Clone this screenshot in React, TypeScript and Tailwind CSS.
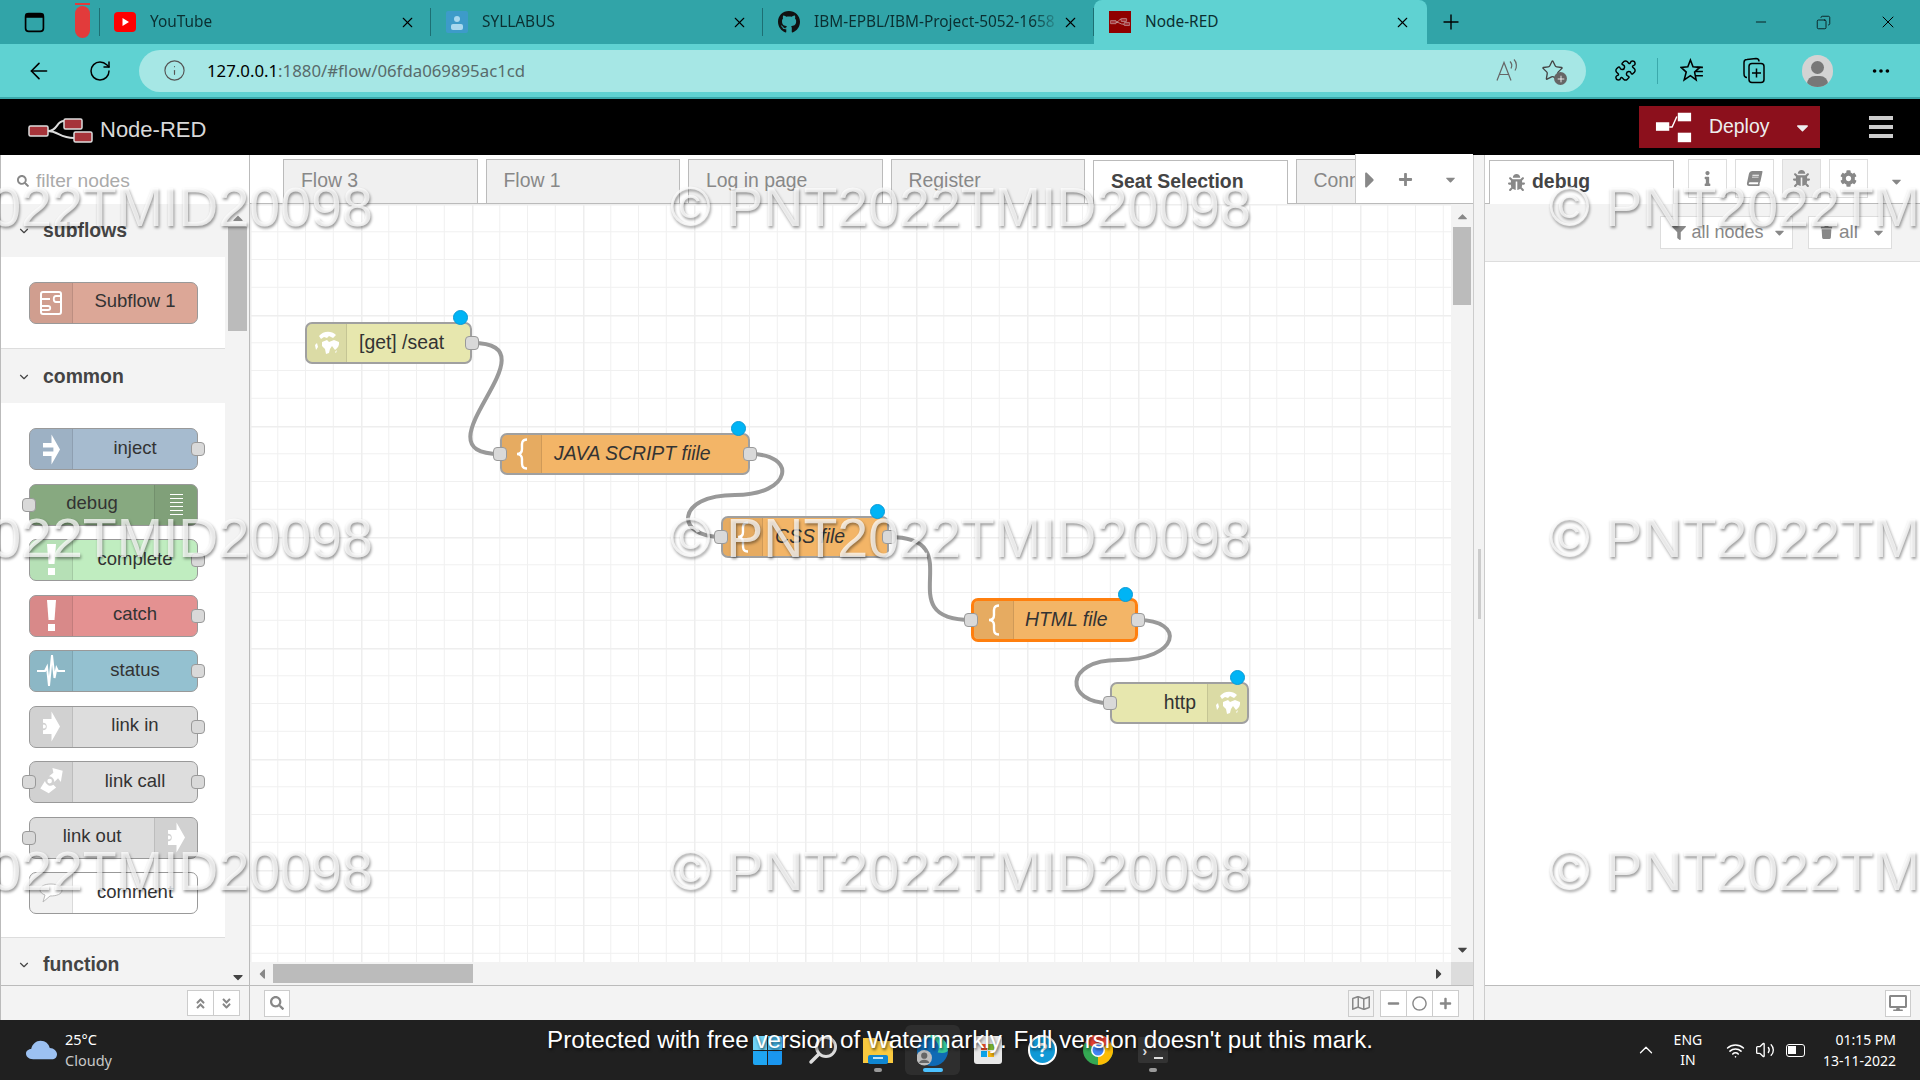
import React from "react";
import {
  ArrowLeft,
  ChevronDown,
  ChevronUp,
  Copy,
  Info,
  Minus,
  MoreHorizontal,
  Plus,
  Puzzle,
  RotateCw,
  Star,
  Volume2,
  Wifi,
  X,
} from "lucide-react";
import {
  FaAngleDoubleDown,
  FaAngleDoubleUp,
  FaBook,
  FaBug,
  FaCaretDown,
  FaCaretLeft,
  FaCaretRight,
  FaCaretUp,
  FaCog,
  FaDesktop,
  FaFilter,
  FaGithub,
  FaInfo,
  FaMinus,
  FaPlus,
  FaRegCircle,
  FaRegMap,
  FaSearch,
  FaTrash,
} from "react-icons/fa";

const NodeRedMark = ({ className }: { className: string }) => (
  <svg viewBox="0 0 65 25" className={className}>
    <path d="M20 13 C30 13 28 3 36 3 M20 13 C30 13 32 20 46 20" fill="none" stroke="#ddd" strokeWidth="2" />
    <rect x="1" y="8" width="19" height="10" rx="1.5" fill="#a6343a" stroke="#ddd" strokeWidth="1.5" />
    <rect x="36" y="1" width="18" height="10" rx="1.5" fill="#a6343a" stroke="#ddd" strokeWidth="1.5" />
    <rect x="46" y="14" width="18" height="10" rx="1.5" fill="#a6343a" stroke="#ddd" strokeWidth="1.5" />
  </svg>
);

const BrowserTab = ({
  title,
  icon,
  width,
}: {
  title: string;
  icon: React.ReactNode;
  width: string;
}) => (
  <div className={`flex h-full items-center ${width}`}>
    <div className="flex w-[22px] justify-center">{icon}</div>
    <span className="ml-[14px] flex-1 overflow-hidden text-[15.4px] whitespace-nowrap text-[#0b2f31] [mask-image:linear-gradient(to_right,black_88%,transparent)]">
      {title}
    </span>
    <X size={17} strokeWidth={1.5} className="mr-[14px] text-black" />
    <div className="h-[28px] w-px bg-[#1d6f73]" />
  </div>
);

const TabStrip = () => (
  <div className="flex h-[44px] items-center bg-[#31a4a8] font-['Noto_Sans',sans-serif]">
    <svg viewBox="0 0 20 20" className="ml-[24px] h-[21px] w-[21px]">
      <rect x="1.5" y="1.5" width="17" height="17" rx="3" fill="none" stroke="#000" strokeWidth="1.6" />
      <rect x="1.5" y="1.5" width="17" height="4" fill="#000" />
    </svg>
    <div className="relative ml-[30px] h-[32px] w-[15px] rounded-full bg-[#e23b3b]">
      <div className="absolute top-[-3px] left-0 h-[2px] w-full bg-[#e23b3b]" />
    </div>
    <div className="mr-[14px] ml-[9px] h-[28px] w-px bg-[#1d6f73]" />
    <BrowserTab
      title="YouTube"
      width="w-[317px]"
      icon={
        <svg viewBox="0 0 22 22" className="h-[22px] w-[22px]">
          <rect width="22" height="20" y="1" rx="4" fill="#f00" />
          <path d="M8.5 7 L15 11 L8.5 15 Z" fill="#fff" />
        </svg>
      }
    />
    <div className="w-[15px]" />
    <BrowserTab
      title="SYLLABUS"
      width="w-[317px]"
      icon={
        <svg viewBox="0 0 22 22" className="h-[24px] w-[22px]">
          <rect width="22" height="22" rx="2" fill="#3d9bc9" />
          <circle cx="11" cy="8" r="3" fill="#a8d8ee" />
          <rect x="5" y="13" width="12" height="6" rx="2" fill="#a8d8ee" />
        </svg>
      }
    />
    <div className="w-[15px]" />
    <BrowserTab title="IBM-EPBL/IBM-Project-5052-1658" width="w-[316px]" icon={<FaGithub size={24} color="#111" />} />
    <div className="flex h-full w-[333px] items-center rounded-t-lg bg-[#5fd2d2]">
      <div className="ml-[15px] flex h-[22px] w-[22px] items-center justify-center bg-[#8f0000]">
        <NodeRedMark className="h-[14px] w-[20px]" />
      </div>
      <span className="ml-[14px] flex-1 text-[15.4px] text-[#0b2f31]">Node-RED</span>
      <X size={17} strokeWidth={1.5} className="mr-[16px] text-black" />
    </div>
    <Plus size={24} strokeWidth={1.4} className="ml-[12px] text-black" />
    <div className="flex-1" />
    <Minus size={16} strokeWidth={1.2} className="mr-[47px] text-black" />
    <Copy size={15} strokeWidth={1.2} className="mr-[47px] -scale-x-100 text-black" />
    <X size={20} strokeWidth={1.2} className="mr-[22px] text-black" />
  </div>
);

const AddressBar = () => (
  <div className="flex h-[55px] items-center border-b-2 border-[#3ba9ac] bg-[#5fd2d2] font-['Noto_Sans',sans-serif]">
    <ArrowLeft size={26} strokeWidth={1.5} className="ml-[26px] text-black" />
    <RotateCw size={24} strokeWidth={1.5} className="ml-[36px] text-black" />
    <div className="ml-[27px] flex h-[42px] w-[1447px] items-center rounded-full bg-[#a6e7e5]">
      <Info size={23} strokeWidth={1.2} className="ml-[24px] text-[#555]" />
      <span className="ml-[21px] flex-1 text-[16.8px] text-[#586b6b]">
        <span className="text-black">127.0.0.1</span>:1880/#flow/06fda069895ac1cd
      </span>
      <svg viewBox="0 0 24 24" className="mr-[22px] h-[25px] w-[24px]" fill="none" stroke="#666" strokeWidth="1.2">
        <path d="M2 22 L9 4 L16 22 M4.5 16 H13.5" />
        <path d="M15 3 C17 5 17 8 16 10 M19 1 C22 4 22 9 20 12" />
      </svg>
      <div className="relative mr-[22px]">
        <Star size={23} strokeWidth={1.4} className="text-[#444]" />
        <div className="absolute right-[-3px] bottom-[-3px] flex h-[13px] w-[13px] items-center justify-center rounded-full bg-[#666]">
          <Plus size={10} className="text-white" />
        </div>
      </div>
    </div>
    <Puzzle size={23} strokeWidth={1.5} className="ml-[28px] text-black" />
    <div className="mr-[22px] ml-[20px] h-[26px] w-px bg-[#3ba9ac]" />
    <svg viewBox="0 0 24 24" className="h-[25px] w-[25px]" fill="none" stroke="#000" strokeWidth="1.5">
      <path d="M10 2 L12.5 8.5 L19 9 L14 13.5 L15.5 21 L10 17 L4 21 L6 13.5 L1 9 L7.5 8.5 Z" />
      <path d="M15 13 H22 M16 9 H22 M15 17 H22" />
    </svg>
    <svg viewBox="0 0 24 26" className="ml-[37px] h-[27px] w-[24px]" fill="none" stroke="#000" strokeWidth="1.5">
      <path d="M5 20 C3 20 2 18 2 16 V5 C2 3 3 2 5 2 L14 1 C16 1 17 2 17 4" />
      <rect x="7" y="6" width="15" height="19" rx="3" />
      <path d="M14.5 11 V20 M10 15.5 H19" />
    </svg>
    <div className="relative ml-[36px] h-[32px] w-[31px] overflow-hidden rounded-full bg-[#d3d3d3]">
      <div className="absolute top-[6px] left-[9px] h-[13px] w-[13px] rounded-full bg-[#777]" />
      <div className="absolute top-[21px] left-[5px] h-[16px] w-[21px] rounded-full bg-[#777]" />
    </div>
    <MoreHorizontal size={22} className="ml-[37px] text-black" />
  </div>
);

const HeaderBar = () => (
  <div className="flex h-[56px] items-center bg-black font-['Liberation_Sans',sans-serif]">
    <NodeRedMark className="mt-[6px] ml-[28px] h-[25px] w-[65px]" />
    <span className="mt-[4px] ml-[7px] text-[22px] text-[#d8d8d8]">Node-RED</span>
    <div className="flex-1" />
    <div className="flex h-[42px] w-[181px] items-center bg-[#8c101c] text-white">
      <svg viewBox="0 0 40 40" className="ml-[15px] h-[38px] w-[40px]">
        <rect x="1" y="15" width="14" height="9" fill="#fff" />
        <rect x="24" y="5" width="14" height="9" fill="#fff" />
        <rect x="24" y="26" width="14" height="10" fill="#fff" />
        <path d="M15 20 L18 20 L23 9" fill="none" stroke="#fff" strokeWidth="1.5" />
      </svg>
      <span className="ml-[15px] flex-1 text-[19.4px] text-[#eee]">Deploy</span>
      <FaCaretDown size={19} className="mr-[8px] text-[#eee]" />
    </div>
    <div className="mr-[27px] ml-[49px] flex h-[22px] w-[24px] flex-col justify-between">
      <div className="h-[4px] bg-[#ccc]" />
      <div className="h-[4px] bg-[#ccc]" />
      <div className="h-[4px] bg-[#ccc]" />
    </div>
  </div>
);

const Port = ({ className }: { className: string }) => (
  <div className={`absolute top-1/2 h-[14px] w-[14px] -translate-y-1/2 rounded-[4px] border border-[#999] bg-[#d9d9d9] ${className}`} />
);

const InjectIcon = () => (
  <svg viewBox="0 0 18 32" className="h-[31px] w-[17px]">
    <path d="M9 0 L18 16 L9 32 L9 23 L0 23 L0 18 L11 18 L11 14 L0 14 L0 9 L9 9 Z" fill="#fff" />
  </svg>
);

const DebugIcon = () => (
  <div className="flex w-[13px] flex-col gap-[2.5px]">
    {[0, 1, 2, 3, 4, 5].map((i) => (
      <div key={i} className="h-[1.5px] bg-white" />
    ))}
  </div>
);

const AlertIcon = () => (
  <svg viewBox="0 0 9 32" className="h-[32px] w-[9px]">
    <path d="M0 0 H9 L7.5 20 H1.5 Z" fill="#fff" />
    <rect x="1" y="24" width="7" height="7" fill="#fff" />
  </svg>
);

const StatusIcon = () => (
  <svg viewBox="0 0 28 34" className="h-[34px] w-[28px]">
    <path d="M0 17 H8 L10 13 L12 32 L15 1 L17.5 24 L19.5 14 L21 17 H28" fill="none" stroke="#fff" strokeWidth="2" />
  </svg>
);

const LinkArrowIcon = () => (
  <svg viewBox="0 0 18 32" className="h-[31px] w-[17px]">
    <path d="M9 0 L18 16 L9 32 L9 24 L0 24 L0 20 A4 4 0 0 0 0 12 L0 8 L9 8 Z" fill="#fff" />
    <circle cx="1" cy="16" r="2" fill="#fff" />
  </svg>
);

const LinkCallIcon = () => (
  <svg viewBox="0 0 24 30" className="h-[28px] w-[23px]">
    <path d="M13 0 L24 3 L22 15 L19 11 L15 15 A5.5 5.5 0 0 0 9 9 L14 5 Z" fill="#fff" />
    <path d="M0 22 L5 14 A6 6 0 0 0 14 18 L17 21 L9 27 Z" fill="#fff" />
    <circle cx="10" cy="14" r="2.5" fill="#fff" />
  </svg>
);

const CommentIcon = () => (
  <svg viewBox="0 0 24 20" className="h-[20px] w-[24px]">
    <path d="M12 1 C18 1 23 3 23 7 C23 11 18 13 11 13 L4 19 L6 12 C3 11 1 9 1 7 C1 3 6 1 12 1 Z" fill="#fff" stroke="#bbb" strokeWidth="1" />
  </svg>
);

const SubflowIcon = () => (
  <svg viewBox="0 0 22 24" className="h-[24px] w-[22px]">
    <rect x="1" y="1" width="20" height="22" rx="2" fill="none" stroke="#fff" strokeWidth="2" />
    <path d="M1 8 H10 M21 5 H16 C13 5 13 11 16 11 H21 M1 15 H8 M8 15 C11 15 11 19 8 19 H1" fill="none" stroke="#fff" strokeWidth="1.8" />
  </svg>
);

type PaletteItem = {
  label: string;
  bg: string;
  icon: React.ReactNode;
  iconRight?: boolean;
  input?: boolean;
  output?: boolean;
};

const commonNodes: PaletteItem[] = [
  { label: "inject", bg: "bg-[#a6bbcf]", icon: <InjectIcon />, output: true },
  { label: "debug", bg: "bg-[#87a980]", icon: <DebugIcon />, iconRight: true, input: true },
  { label: "complete", bg: "bg-[#c0edc0]", icon: <AlertIcon />, output: true },
  { label: "catch", bg: "bg-[#e49191]", icon: <AlertIcon />, output: true },
  { label: "status", bg: "bg-[#94c1d0]", icon: <StatusIcon />, output: true },
  { label: "link in", bg: "bg-[#dddddd]", icon: <LinkArrowIcon />, output: true },
  { label: "link call", bg: "bg-[#dddddd]", icon: <LinkCallIcon />, input: true, output: true },
  { label: "link out", bg: "bg-[#dddddd]", icon: <LinkArrowIcon />, iconRight: true, input: true },
  { label: "comment", bg: "bg-white", icon: <CommentIcon /> },
];

const PaletteNode = ({ label, bg, icon, iconRight, input, output }: PaletteItem) => (
  <div className={`relative flex h-[42px] w-[169px] rounded-[7px] border border-[#999] ${bg} ${iconRight ? "flex-row-reverse" : ""}`}>
    <div
      className={`flex w-[43px] shrink-0 items-center justify-center border-black/10 bg-black/5 ${
        iconRight ? "rounded-r-[6px] border-l" : "rounded-l-[6px] border-r"
      }`}
    >
      {icon}
    </div>
    <div className="flex flex-1 items-center justify-center pb-[3px] text-[18.5px] text-[#333]">{label}</div>
    {input && <Port className="left-[-8px]" />}
    {output && <Port className="right-[-8px]" />}
  </div>
);

const PaletteHead = ({ label, h }: { label: string; h: string }) => (
  <div className={`flex items-center bg-[#f3f3f3] pl-[16px] ${h}`}>
    <ChevronDown size={14} strokeWidth={2} className="text-[#444]" />
    <span className="ml-[12px] text-[19.4px] font-bold text-[#444]">{label}</span>
  </div>
);

const Palette = () => (
  <div className="flex w-[250px] shrink-0 flex-col border-x border-[#bbb] font-['Liberation_Sans',sans-serif]">
    <div className="flex h-[49px] items-center pt-[3px] pl-[16px] text-[#aaa]">
      <FaSearch size={12} className="text-[#888]" />
      <span className="ml-[7px] text-[19.2px]">filter nodes</span>
    </div>
    <div className="flex flex-1">
      <div className="flex w-[224px] shrink-0 flex-col">
        <PaletteHead label="subflows" h="h-[53px]" />
        <div className="flex h-[92px] items-center border-b border-[#ddd] pl-[28px]">
          <PaletteNode label="Subflow 1" bg="bg-[#dca797]" icon={<SubflowIcon />} />
        </div>
        <PaletteHead label="common" h="h-[54px] pt-[2px]" />
        <div className="flex h-[535px] flex-col gap-[13.5px] border-b border-[#ddd] pt-[25px] pl-[28px]">
          {commonNodes.map((node) => (
            <PaletteNode key={node.label} {...node} />
          ))}
        </div>
        <PaletteHead label="function" h="flex-1 pt-[7px]" />
      </div>
      <div className="relative flex-1 bg-[#f3f3f3]">
        <div className="mx-auto mt-[23px] h-[104px] w-[19px] bg-[#bbb]" />
        <FaCaretUp size={16} className="absolute top-[6px] left-[5px] text-[#888]" />
        <FaCaretDown size={16} className="absolute bottom-[0px] left-[5px] text-[#444]" />
      </div>
    </div>
    <div className="flex h-[35px] items-center justify-end border-t border-[#bbb] bg-[#f3f3f3] pr-[9px]">
      <div className="flex h-[26px] w-[53px] border border-[#ccc] bg-white text-[#888]">
        <div className="flex flex-1 items-center justify-center border-r border-[#ccc]">
          <FaAngleDoubleUp size={13} />
        </div>
        <div className="flex flex-1 items-center justify-center">
          <FaAngleDoubleDown size={13} />
        </div>
      </div>
    </div>
  </div>
);

const flowTabs = ["Flow 3", "Flow 1", "Log in page", "Register"];

const WorkspaceTabs = () => (
  <div className="flex h-[49px] items-end border-b border-[#bbb] pl-[33px]">
    {flowTabs.map((t) => (
      <div key={t} className="mr-[8px] flex h-[44px] w-[194.5px] items-center border border-b-0 border-[#bbb] bg-[#f0f0f0] pb-[1px] pl-[17px] text-[19.4px] text-[#888]">
        {t}
      </div>
    ))}
    <div className="relative top-px mr-[8px] flex h-[44px] w-[194.5px] items-center border border-b-0 border-[#bbb] bg-white pb-[1px] pl-[17px] text-[19.4px] font-bold text-[#444]">
      Seat Selection
    </div>
    <div className="flex h-[44px] w-[59px] items-center overflow-hidden border border-r-0 border-b-0 border-[#bbb] bg-[#f0f0f0] pb-[1px] pl-[17px] text-[19.4px] text-[#888]">
      Connection
    </div>
    <div className="flex h-[49px] flex-1 items-center border-l border-[#ccc] bg-white pt-[2px] text-[#888]">
      <FaCaretRight size={26} className="ml-[1px]" />
      <FaPlus size={15} className="ml-[15px]" />
      <FaCaretDown size={15} className="ml-[30px]" />
    </div>
  </div>
);

type FlowNodeProps = {
  label: string;
  pos: string;
  size: string;
  bg: string;
  icon: React.ReactNode;
  italic?: boolean;
  iconRight?: boolean;
  input?: boolean;
  output?: boolean;
  selected?: boolean;
};

const Brace = () => (
  <svg viewBox="0 0 14 32" className="h-[32px] w-[14px]">
    <path d="M12 1.5 C6 1.5 7 6 7 11 C7 14 5 16 2 16 C5 16 7 18 7 21 C7 26 6 30.5 12 30.5" fill="none" stroke="#fff" strokeWidth="2.4" />
  </svg>
);

// white land on a see-through globe, the node colour shows as ocean
const Globe = () => (
  <svg viewBox="0 0 26 26" className="h-[26px] w-[26px]">
    <path d="M5 6 C9 1 17 0 22 5 L19 8 L15 6 L13 8 L10 7 L7 9 Z" fill="#fff" />
    <path d="M8 12 L13 10 L15 12 L20 10 L25 12 C25.5 15 24 18 21 20 L18 16 L16 19 L15 23 L12 24 L11 19 L8 16 Z" fill="#fff" />
    <path d="M1 15 L3 13 L4 17 L2 20 Z" fill="#fff" />
    <path d="M21 22 L23 20 L22 23 Z" fill="#fff" />
  </svg>
);

const flowNodes: FlowNodeProps[] = [
  { label: "[get] /seat", pos: "left-[55px] top-[118px]", size: "w-[167px] h-[42px]", bg: "bg-[#e7e7ae]", icon: <Globe />, output: true },
  { label: "JAVA SCRIPT fiile", pos: "left-[250px] top-[229px]", size: "w-[250px] h-[42px]", bg: "bg-[#f3b567]", icon: <Brace />, italic: true, input: true, output: true },
  { label: "CSS file", pos: "left-[471px] top-[312px]", size: "w-[168px] h-[42px]", bg: "bg-[#f3b567]", icon: <Brace />, italic: true, input: true, output: true },
  { label: "HTML file", pos: "left-[721px] top-[394px]", size: "w-[167px] h-[44px]", bg: "bg-[#f3b567]", icon: <Brace />, italic: true, input: true, output: true, selected: true },
  { label: "http", pos: "left-[860px] top-[478px]", size: "w-[139px] h-[42px]", bg: "bg-[#e7e7ae]", icon: <Globe />, iconRight: true, input: true },
];

const FlowNode = ({ label, pos, size, bg, icon, italic, iconRight, input, output, selected }: FlowNodeProps) => (
  <div
    className={`absolute flex rounded-[7px] ${pos} ${size} ${bg} ${
      selected ? "border-[3px] border-[#ff7f0e]" : "border-2 border-[#a0a0a0]"
    } ${iconRight ? "flex-row-reverse" : ""}`}
  >
    <div
      className={`flex w-[40px] shrink-0 items-center justify-center border-black/10 bg-black/5 ${
        iconRight ? "rounded-r-[5px] border-l" : "rounded-l-[5px] border-r"
      }`}
    >
      {icon}
    </div>
    <div
      className={`flex flex-1 items-center text-[19.4px] whitespace-nowrap text-[#333] ${italic ? "italic" : ""} ${
        iconRight ? "justify-end pr-[11px]" : selected ? "pl-[11px]" : "pl-[12px]"
      }`}
    >
      {label}
    </div>
    {input && <Port className={selected ? "left-[-10px]" : "left-[-9px]"} />}
    {output && <Port className={selected ? "right-[-10px]" : "right-[-9px]"} />}
    <div className="absolute top-[-14px] right-[2px] h-[15px] w-[15px] rounded-full border border-[#0a9ad6] bg-[#00b4f5]" />
  </div>
);

const Canvas = () => (
  <div className="relative flex-1 overflow-hidden bg-white">
    <svg className="absolute inset-0 h-full w-full">
      <defs>
        <pattern id="grid" width="111" height="111" patternUnits="userSpaceOnUse">
          <path d="M0 27.75 H111 M0 55.5 H111 M0 83.25 H111 M27.75 0 V111 M55.5 0 V111 M83.25 0 V111" stroke="#f0f0f0" strokeWidth="1" fill="none" />
          <path d="M0 0 H111 M0 0 V111" stroke="#eee" strokeWidth="3" fill="none" />
        </pattern>
      </defs>
      <rect width="100%" height="100%" fill="url(#grid)" />
      <g fill="none" stroke="#999" strokeWidth="4">
        <path d="M222 139 C312 139 160 250 250 250" />
        <path d="M500 250 C548 250 542 291 485 291 C425 291 425 333 471 333" />
        <path d="M639 333 C724 333 636 416 721 416" />
        <path d="M888 416 C936 416 930 456 868 456 C814 456 814 499 860 499" />
      </g>
    </svg>
    {flowNodes.map((node) => (
      <FlowNode key={node.label} {...node} />
    ))}
  </div>
);

const Workspace = () => (
  <div className="flex min-w-0 flex-1 flex-col font-['Liberation_Sans',sans-serif]">
    <WorkspaceTabs />
    <div className="flex flex-1">
      <Canvas />
      <div className="relative w-[22px] bg-[#f3f3f3]">
        <div className="mx-auto mt-[23px] h-[78px] w-[18px] bg-[#bbb]" />
        <FaCaretUp size={15} className="absolute top-[5px] left-[4px] text-[#888]" />
        <FaCaretDown size={15} className="absolute bottom-[5px] left-[4px] text-[#444]" />
      </div>
    </div>
    <div className="flex h-[23px] bg-[#f3f3f3]">
      <div className="flex flex-1 items-center">
        <FaCaretLeft size={16} className="ml-[4px] text-[#888]" />
        <div className="ml-[3px] h-[19px] w-[200px] bg-[#bbb]" />
        <div className="flex-1" />
        <FaCaretRight size={16} className="mr-[4px] text-[#444]" />
      </div>
      <div className="w-[22px] bg-[#dcdcdc]" />
    </div>
    <div className="flex h-[35px] items-center border-t border-[#bbb] bg-[#f3f3f3] pl-[14px] text-[#888]">
      <div className="flex h-[27px] w-[26px] items-center justify-center border border-[#ccc] bg-white">
        <FaSearch size={14} />
      </div>
      <div className="flex-1" />
      <div className="flex h-[27px] w-[26px] items-center justify-center border border-[#ccc]">
        <FaRegMap size={18} />
      </div>
      <div className="mr-[14px] ml-[6px] flex h-[27px] w-[79px] border border-[#ccc] bg-white">
        <div className="flex flex-1 items-center justify-center border-r border-[#ccc]">
          <FaMinus size={13} />
        </div>
        <div className="flex flex-1 items-center justify-center border-r border-[#ccc]">
          <FaRegCircle size={15} />
        </div>
        <div className="flex flex-1 items-center justify-center">
          <FaPlus size={13} />
        </div>
      </div>
    </div>
  </div>
);

const Separator = () => (
  <div className="flex w-[12px] shrink-0 items-center justify-center border-x border-[#ccc] bg-[#f3f3f3] pb-[8px]">
    <div className="h-[70px] w-[3px] bg-[#ccc]" />
  </div>
);

const SidebarTabButton = ({ children, active }: { children: React.ReactNode; active?: boolean }) => (
  <div className={`mr-[8px] flex h-[39px] w-[39px] items-center justify-center border border-[#ddd] text-[#888] ${active ? "bg-[#eee]" : "bg-white"}`}>
    {children}
  </div>
);

const Sidebar = () => (
  <div className="flex w-[435px] shrink-0 flex-col font-['Liberation_Sans',sans-serif]">
    <div className="flex h-[49px] items-end border-b border-[#bbb] pl-[4px]">
      <div className="relative top-px flex h-[44px] w-[185px] items-center border border-b-0 border-[#bbb] bg-white pb-[1px] pl-[18px] text-[19.4px] font-bold text-[#444]">
        <FaBug size={17} className="text-[#888]" />
        <span className="ml-[7px]">debug</span>
      </div>
      <div className="ml-[14px] flex h-[44px] pb-[1px]">
        <SidebarTabButton><FaInfo size={15} /></SidebarTabButton>
        <SidebarTabButton><FaBook size={15} className="-skew-x-12" /></SidebarTabButton>
        <SidebarTabButton active><FaBug size={17} /></SidebarTabButton>
        <SidebarTabButton><FaCog size={17} /></SidebarTabButton>
      </div>
      <FaCaretDown size={15} className="mb-[14px] ml-[13px] text-[#888]" />
    </div>
    <div className="flex h-[58px] items-center justify-end gap-[15px] border-b border-[#ddd] bg-[#f3f3f3] pr-[28px] text-[18px] text-[#888]">
      <div className="flex h-[33px] w-[133px] items-center justify-center border border-[#ddd] bg-white pl-[6px]">
        <FaFilter size={14} />
        <span className="ml-[5px]">all nodes</span>
        <FaCaretDown size={15} className="ml-[8px]" />
      </div>
      <div className="flex h-[33px] w-[84px] items-center justify-center border border-[#ddd] bg-white pl-[6px]">
        <FaTrash size={13} />
        <span className="ml-[6px] text-[19px]">all</span>
        <FaCaretDown size={15} className="ml-[13px]" />
      </div>
    </div>
    <div className="flex-1 bg-white" />
    <div className="flex h-[35px] items-center justify-end border-t border-[#bbb] bg-[#f3f3f3] pr-[9px]">
      <div className="flex h-[27px] w-[26px] items-center justify-center border border-[#ccc] bg-white text-[#888]">
        <FaDesktop size={18} />
      </div>
    </div>
  </div>
);

const WinIcon = () => (
  <div className="grid h-[29px] w-[29px] grid-cols-2 gap-[1px]">
    <div className="rounded-tl-[2px] bg-[#6fd3f7]" />
    <div className="rounded-tr-[2px] bg-[#4cc0f5]" />
    <div className="rounded-bl-[2px] bg-[#1fa5f2]" />
    <div className="rounded-br-[2px] bg-[#1a96ef]" />
  </div>
);

const TaskIcon = ({ children, active, dot }: { children: React.ReactNode; active?: boolean; dot?: string }) => (
  <div className={`relative flex h-[50px] w-[55px] items-center justify-center rounded-md ${active ? "bg-[#2e2e2e]" : ""}`}>
    {children}
    {dot && <div className={`absolute bottom-[3px] h-[4px] rounded-full ${dot}`} />}
  </div>
);

const Taskbar = () => (
  <div className="flex h-[60px] items-center bg-[#202020] font-['Noto_Sans',sans-serif] text-white">
    <svg viewBox="0 0 30 18" className="ml-[26px] h-[20px] w-[31px]">
      <path d="M7 18 C2 18 0 15 0 12.5 C0 9.5 3 8 5 8 C6 3 10 0 14 0 C19 0 22 3 23 7 C27 7 30 10 30 13 C30 16 28 18 25 18 Z" fill="#9cc1f2" />
    </svg>
    <div className="ml-[8px] flex w-[100px] flex-col text-[14.5px] leading-[21px]">
      <span>25°C</span>
      <span className="text-[#c8c8c8]">Cloudy</span>
    </div>
    <div className="ml-[575px] flex items-center">
      <TaskIcon><WinIcon /></TaskIcon>
      <TaskIcon>
        <svg viewBox="0 0 30 30" className="h-[30px] w-[30px]">
          <circle cx="18" cy="12" r="9.5" fill="#333" stroke="#ddd" strokeWidth="3" />
          <path d="M11 19 L3 27" stroke="#ddd" strokeWidth="3.5" strokeLinecap="round" />
        </svg>
      </TaskIcon>
      <TaskIcon dot="w-[8px] bg-[#9a9a9a]">
        <svg viewBox="0 0 30 28" className="h-[28px] w-[30px]">
          <path d="M0 2 H12 L15 5 H30 V27 H0 Z" fill="#f9c93f" />
          <rect x="5" y="19" width="20" height="9" rx="2" fill="#0f86d1" />
          <rect x="10" y="21" width="10" height="2" fill="#bfe4fa" />
        </svg>
      </TaskIcon>
      <TaskIcon active dot="w-[20px] bg-[#4cc2ff]">
        <svg viewBox="0 0 30 30" className="h-[31px] w-[31px]">
          <circle cx="15" cy="15" r="15" fill="#0f6ab4" />
          <path d="M30 15 A15 15 0 0 0 6 3 C16 0 24 8 20 17 C26 18 29 17 30 15 Z" fill="#38c99a" />
          <circle cx="7" cy="22" r="7.5" fill="#bdbdbd" />
          <circle cx="7" cy="20" r="3" fill="#666" />
          <path d="M2 27 C3 23 11 23 12 27 Z" fill="#666" />
        </svg>
      </TaskIcon>
      <TaskIcon>
        <div className="flex h-[28px] w-[28px] items-center justify-center rounded-[3px] bg-[#e8e8e8]">
          <div className="grid h-[13px] w-[13px] grid-cols-2 gap-[1px]">
            <div className="bg-[#e8502a]" />
            <div className="bg-[#7db631]" />
            <div className="bg-[#0da3e8]" />
            <div className="bg-[#f9b814]" />
          </div>
        </div>
      </TaskIcon>
      <TaskIcon>
        <div className="flex h-[30px] w-[29px] items-center justify-center rounded-full border-2 border-white bg-[#1199d6] text-[20px] font-bold text-white">?</div>
      </TaskIcon>
      <TaskIcon>
        <svg viewBox="0 0 30 30" className="h-[30px] w-[30px]">
          <circle cx="15" cy="15" r="15" fill="#34a853" />
          <path d="M15 15 L2 7.5 A15 15 0 0 1 28 7.5 Z" fill="#ea4335" />
          <path d="M15 15 L28 7.5 A15 15 0 0 1 15 30 Z" fill="#fbbc05" />
          <circle cx="15" cy="15" r="7" fill="#fff" />
          <circle cx="15" cy="15" r="5.5" fill="#4285f4" />
        </svg>
      </TaskIcon>
      <TaskIcon dot="w-[8px] bg-[#9a9a9a]">
        <div className="flex h-[26px] w-[30px] items-end rounded-[2px] bg-[#333] pb-[4px] pl-[3px] font-['Liberation_Mono',monospace] text-[14px] leading-none text-[#ddd]">
          <span className="font-bold">›</span>
          <div className="ml-[5px] h-[2px] w-[9px] bg-[#ddd]" />
        </div>
      </TaskIcon>
    </div>
    <div className="flex-1" />
    <ChevronUp size={22} strokeWidth={1.4} className="mr-[13px]" />
    <div className="flex w-[36px] flex-col items-center text-[14px] leading-[20px]">
      <span>ENG</span>
      <span>IN</span>
    </div>
    <Wifi size={19} className="ml-[20px]" />
    <Volume2 size={20} strokeWidth={1.6} className="ml-[10px]" />
    <div className="ml-[11px] flex h-[13px] w-[19px] items-center rounded-[3px] border border-white p-[1.5px]">
      <div className="h-full w-[8px] bg-white" />
    </div>
    <div className="mr-[24px] ml-[18px] flex flex-col items-end text-[14px] leading-[21px]">
      <span>01:15 PM</span>
      <span>13-11-2022</span>
    </div>
  </div>
);

// stamp burned into the screenshot, sits over everything
const stampClasses = [
  "left-[-208px] top-[174px]",
  "left-[670px] top-[174px]",
  "left-[1549px] top-[174px]",
  "left-[-208px] top-[505px]",
  "left-[670px] top-[505px]",
  "left-[1549px] top-[505px]",
  "left-[-208px] top-[838px]",
  "left-[670px] top-[838px]",
  "left-[1549px] top-[838px]",
];

const Watermarks = () => (
  <div className="pointer-events-none absolute inset-0 overflow-hidden font-['Liberation_Sans',sans-serif]">
    {stampClasses.map((cls) => (
      <span
        key={cls}
        className={`absolute text-[55.5px] leading-[66px] whitespace-nowrap text-white/75 [text-shadow:1px_2px_3px_rgba(0,0,0,0.4)] ${cls}`}
      >
        © PNT2022TMID20098
      </span>
    ))}
    <span className="absolute top-[1025px] left-[547px] text-[24.2px] leading-[30px] whitespace-nowrap text-white [text-shadow:1px_2px_3px_rgba(0,0,0,0.6)]">
      Protected with free version of Watermarkly. Full version doesn't put this mark.
    </span>
  </div>
);

export default function App() {
  return (
    <div className="relative flex h-[1080px] w-[1920px] flex-col overflow-hidden bg-white">
      <TabStrip />
      <AddressBar />
      <HeaderBar />
      <div className="flex min-h-0 flex-1">
        <Palette />
        <Workspace />
        <Separator />
        <Sidebar />
      </div>
      <Taskbar />
      <Watermarks />
    </div>
  );
}
